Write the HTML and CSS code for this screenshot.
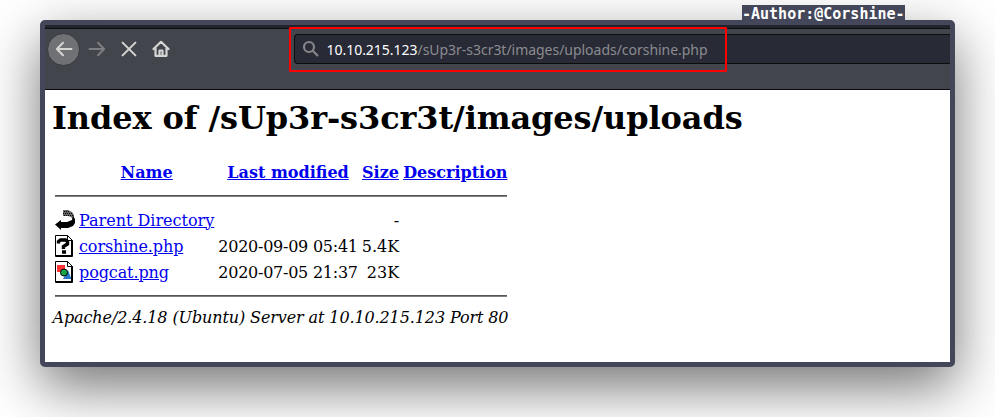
FILE: index.html
```html
<!DOCTYPE html>
<html lang="en">
<head>
<meta charset="utf-8">
<title>Index of /sUp3r-s3cr3t/images/uploads</title>
<link rel="stylesheet" href="styles.css">
</head>
<body>
<div class="author">-Author:@Corshine-</div>
<main class="window">
  <header class="toolbar">
    <nav class="nav">
      <span class="back"><svg width="18" height="18" viewBox="0 0 18 18"><path d="M16.5 9H2M8 2.7 1.9 9 8 15.3"/></svg></span>
      <svg class="forward" width="18" height="18" viewBox="0 0 18 18"><path d="M1.5 9H16M10 2.7 16.1 9 10 15.3"/></svg>
      <svg class="stop" width="16" height="16" viewBox="0 0 16 16"><path d="M1.6 1.6 14.4 14.4M14.4 1.6 1.6 14.4"/></svg>
      <svg class="home" width="18" height="18" viewBox="0 0 18 18"><path d="M1.5 9 9 1.8 16.5 9M3.5 8v7.8h11V8M7.5 15.5v-5h3v5"/></svg>
    </nav>
    <div class="url">
      <svg width="18" height="18" viewBox="0 0 18 18"><circle cx="7" cy="7" r="5"/><path d="M10.7 10.7 16 16"/></svg>
      <span class="address"><b>10.10.215.123</b>/sUp3r-s3cr3t/images/uploads/corshine.php</span>
      <i class="highlight"></i>
    </div>
  </header>
  <section class="page">
    <h1>Index of /sUp3r-s3cr3t/images/uploads</h1>
    <table>
      <tr class="head"><th><span class="blank"></span></th><th><a href="#">Name</a></th><th><a href="#">Last modified</a></th><th><a href="#">Size</a></th><th><a href="#">Description</a></th></tr>
      <tr><th colspan="5"><hr></th></tr>
      <tr>
        <td><svg width="20" height="22" viewBox="0 0 20 22"><path fill="#666" d="M8 1h5l4 2 2 3v6l-3-4-3-1H8z"/><path stroke="#000" stroke-dasharray="1 1" d="M9 2.5h5M8 4.5h9M9 6.5h9"/><path d="M0 15.5 6 11v2h6l5-2 1-4 2 3v4l-2 3-5 2H6v2z"/></svg></td>
        <td><a href="#">Parent Directory</a></td><td></td><td class="size">-</td><td></td>
      </tr>
      <tr>
        <td><svg width="20" height="22" viewBox="0 0 20 22"><path fill="#fff" stroke="#000" d="M.5.5h12l5 5v16H.5z"/><path fill="none" stroke="#000" d="M12.5.5v5h5M16.5 6v15M1 20.5h16"/><path fill="none" stroke="#000" stroke-width="3.4" d="M3.5 8.5V6.5L5.5 5h5L12.5 6.5v2.5L8.5 11.5V14M7 17h4"/></svg></td>
        <td><a class="file" href="#">corshine.php</a></td><td class="date">2020-09-09 05:41</td><td class="size">5.4K</td><td></td>
      </tr>
      <tr>
        <td><svg width="20" height="22" viewBox="0 0 20 22"><path fill="#fff" stroke="#000" d="M.5.5h12l5 5v16H.5z"/><path fill="#f33" d="M2 4h8v7H2z"/><path fill="#2878c8" d="M13 9l3.5 9H8z"/><circle cx="9" cy="11.5" r="3.5" fill="#19a64b" stroke="#000"/><path fill="#fff" stroke="#000" d="M12.5.5v5h5z"/><path fill="none" stroke="#000" d="M16.5 6v15M1 20.5h16"/></svg></td>
        <td><a class="file" href="#">pogcat.png</a></td><td class="date">2020-07-05 21:37</td><td class="size">23K</td><td></td>
      </tr>
      <tr><th colspan="5"><hr></th></tr>
    </table>
    <address>Apache/2.4.18 (Ubuntu) Server at 10.10.215.123 Port 80</address>
  </section>
</main>
</body>
</html>
```
FILE: styles.css
```css
* { box-sizing: border-box; }
body {
  margin: 0;
  height: 417px;
  overflow: hidden;
  background: #fff;
  font: 16px/19px "DejaVu Serif", serif;
  color: #000;
}
.author {
  position: relative;
  z-index: 1;
  width: 163px;
  height: 15px;
  margin: 5px 0 0 742px;
  background: #44475a;
  color: #fff;
  font: bold 15px/18px "DejaVu Sans Mono", monospace;
  white-space: nowrap;
}
.window {
  width: 915px;
  height: 347px;
  margin-left: 40px;
  border: 5px solid #44475a;
  border-radius: 5px;
  background: #fff;
  box-shadow: 0 20px 55px rgba(0, 0, 0, .55);
}
.toolbar {
  display: flex;
  height: 65px;
  padding-top: 6px;
  border-top: 3px solid #21232d;
  border-bottom: 1px solid #0c0c0f;
  background: #43454c;
  box-shadow: inset 0 1px #0f1014;
}
.nav { display: flex; width: 249px; height: 30px; align-items: center; }
.nav svg { fill: none; stroke: #d5d5d3; stroke-width: 2; stroke-linecap: round; stroke-linejoin: round; flex: none; }
.back {
  display: flex;
  align-items: center;
  justify-content: center;
  width: 33px;
  height: 33px;
  margin-left: 2px;
  border: 1px solid #37383d;
  border-radius: 50%;
  background: #707174;
}
.nav .forward { margin-left: 8px; stroke: #7d7e82; }
.nav .stop { margin-left: 15px; }
.nav .home { margin-left: 15px; stroke-width: 2.2; }
.url {
  position: relative;
  display: flex;
  align-items: center;
  flex: 1;
  height: 30px;
  padding-left: 7px;
  border: 1px solid #0c0c0f;
  border-right: 0;
  border-radius: 4px 0 0 4px;
  background: #282a36;
}
.url svg { fill: none; stroke: #85868a; stroke-width: 2.2; }
.address {
  margin: 1px 0 0 6.5px;
  font: 14px/20px "Noto Sans", sans-serif;
  letter-spacing: -.03px;
  color: #8b8c91;
  white-space: nowrap;
}
.address b { font-weight: 400; color: #fff; }
.highlight { position: absolute; left: -6px; top: -8px; width: 438px; height: 45px; border: 2px solid #f00; border-radius: 1px; }
.page { padding: 10px 0 0 7px; }
h1 { margin: 0 0 21px; font-size: 32px; line-height: 37px; letter-spacing: -.11px; }
table { border-spacing: 2px; }
td, th { padding: 1px; }
td:first-child { height: 24px; }
table svg, .blank { display: block; width: 20px; height: 22px; }
a { color: #00e; }
.file { letter-spacing: -.1px; }
.date { letter-spacing: -.25px; }
hr { height: 2px; margin: 8px 0; border: solid; border-width: 1px 0; border-color: #555 #808080 #808080; }
.size { text-align: right; }
address { padding-left: .5px; font-style: italic; letter-spacing: -.11px; }
```
